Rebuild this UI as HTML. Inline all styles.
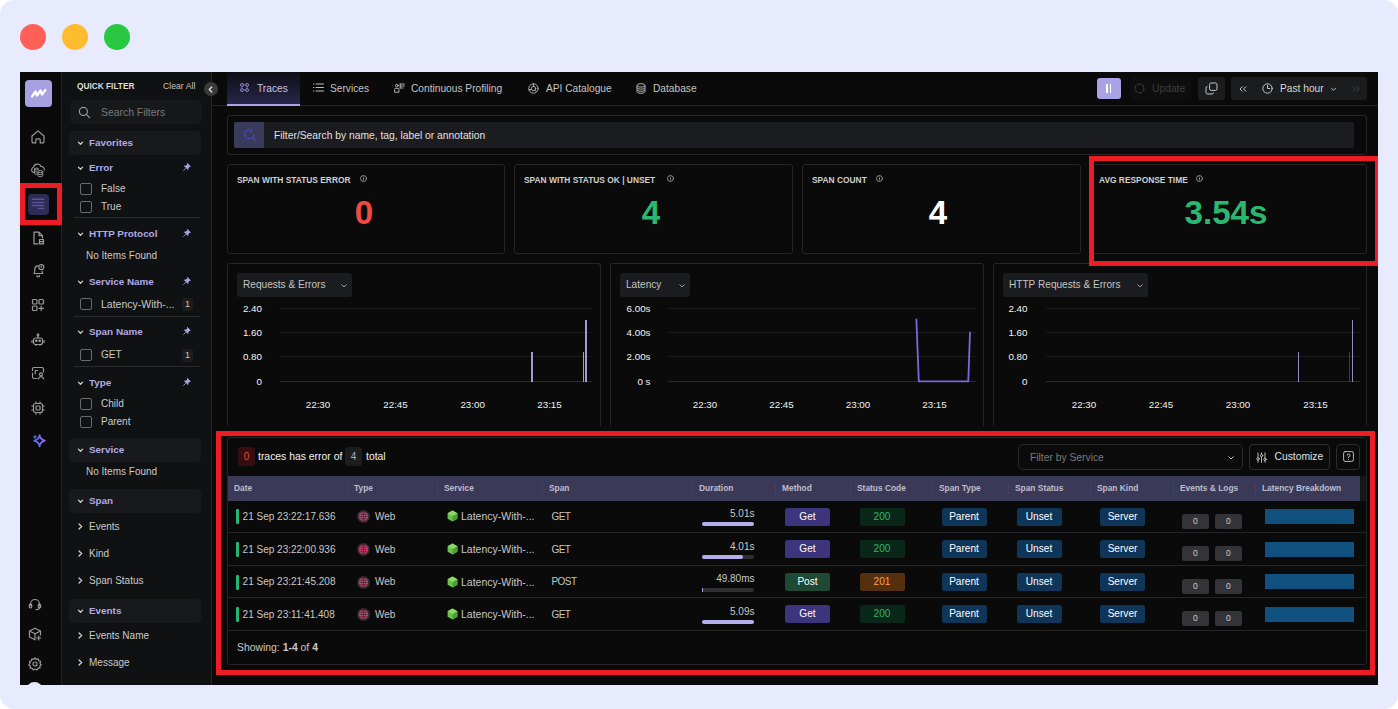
<!DOCTYPE html><html><head><meta charset="utf-8"><title>Traces</title><style>
*{box-sizing:border-box;margin:0;padding:0}
html,body{width:1398px;height:709px;overflow:hidden;background:#fff}
body{font-family:"Liberation Sans",sans-serif;color:#d6d6d6;font-size:11px;position:relative}
.frame{position:absolute;left:0;top:0;width:1398px;height:709px;background:#e8ebfe;border-radius:14px;overflow:hidden}
.dot{position:absolute;top:24px;width:26px;height:26px;border-radius:50%}
.app{position:absolute;left:20px;top:72px;width:1358px;height:613px;background:#0a0a0a;overflow:hidden}
.abs{position:absolute}
.t{position:absolute;white-space:nowrap;line-height:1}
.nav{position:absolute;left:0;top:0;width:42px;height:613px;background:#0a0a0a;border-right:1px solid #222}
.side{position:absolute;left:42px;top:0;width:150px;height:613px;background:#101113;border-right:1px solid #262626}
.hdr{position:absolute;left:7px;width:132px;height:24px;background:#18191c;border-radius:5px}
.lav{color:#b0aae6;font-weight:bold}
.cb{position:absolute;left:18px;width:12px;height:12px;border:1px solid #6a6a6a;border-radius:2px}
.div{position:absolute;left:12px;width:126px;height:1px;background:#2a2a2c}
.cnt{position:absolute;left:138px;width:11px;height:13px;background:#1b1c1e;border-radius:2px;color:#c8c8c8;font-size:9px;text-align:center;line-height:13px}
.card{position:absolute;border:1px solid #262626;border-radius:3px;background:#0a0a0a}
.red{position:absolute;border:5px solid #ee1c25}
.badge{position:absolute;height:18px;border-radius:2.5px;text-align:center;line-height:18px;font-size:10.1px;color:#fff}
svg{position:absolute;overflow:visible}
</style></head><body>
<div class="frame">
<div class="dot" style="left:20px;background:#ff5f57"></div>
<div class="dot" style="left:62px;background:#febc2e"></div>
<div class="dot" style="left:104px;background:#28c840"></div>
<div class="app">
<div class="nav"></div>
<div class="abs" style="left:5px;top:8px;width:27px;height:27px;background:#a7a1e2;border-radius:4px"></div>
<svg style="left:5px;top:8px" width="27" height="27" viewBox="0 0 27 27"><path d="M7 16.5 L10.5 11.5 L12 15.5 L15.5 10.5 L17 14.5 L20.5 9.8" fill="none" stroke="#fff" stroke-width="2.2" stroke-linecap="round" stroke-linejoin="round"/></svg>
<div class="abs" style="left:7.800000000000001px;top:122px;width:21px;height:21px;background:#2e2c52;border-radius:4px"></div>
<svg style="left:10.299999999999997px;top:57.30000000000001px" width="16" height="16" viewBox="0 0 16 16" fill="none" stroke="#9a9a9a" stroke-width="1.2" stroke-linecap="round" stroke-linejoin="round"><path d="M2 7 L8 1.9 L14 7 V12.6 A1.3 1.3 0 0 1 12.7 13.9 H10.2 V10.8 A1 1 0 0 0 9.2 9.8 H6.8 A1 1 0 0 0 5.8 10.8 V13.9 H3.3 A1.3 1.3 0 0 1 2 12.6 Z"/></svg>
<svg style="left:10.299999999999997px;top:90.0px" width="16" height="16" viewBox="0 0 16 16" fill="none" stroke="#9a9a9a" stroke-width="1.2" stroke-linecap="round" stroke-linejoin="round"><path d="M3.4 10.6 A3.1 3.1 0 0 1 3.6 4.9 A3.9 3.9 0 0 1 11 4.6 A3 3 0 0 1 14.3 8.2" stroke-width="1.1"/><ellipse cx="6.3" cy="7" rx="1.9" ry="0.9" stroke-width="1"/><path d="M4.4 7 V11.4 A1.9 0.9 0 0 0 6.6 12.2 M4.4 9.2 A1.9 0.9 0 0 0 6.6 10" stroke-width="1"/><ellipse cx="10.3" cy="9.6" rx="2.4" ry="1.1" stroke-width="1"/><path d="M7.9 9.6 V13.6 A2.4 1.1 0 0 0 12.7 13.6 V9.6 M7.9 11.6 A2.4 1.1 0 0 0 12.7 11.6" stroke-width="1"/></svg>
<svg style="left:10.399999999999999px;top:124.4px" width="16" height="16" viewBox="0 0 16 16" fill="none" stroke="#58539c" stroke-width="1.5" stroke-linecap="round" stroke-linejoin="round"><path d="M2.3 3.2 H13.7 M2.3 6.4 H4.2 M5.2 6.4 H13.7 M2.3 9.4 H10 M11 9.4 H13.7 M8.2 12.6 H13.7"/></svg>
<svg style="left:10.0px;top:158.0px" width="16" height="16" viewBox="0 0 16 16" fill="none" stroke="#9a9a9a" stroke-width="1.2" stroke-linecap="round" stroke-linejoin="round"><path d="M9 2.2 H4 V13.8 H8 M9 2.2 L12.5 5.7 V8 M9 2.2 V5.7 H12.5"/><rect x="9.5" y="9.5" width="4" height="4.3"/><path d="M9.5 11.6 H13.5"/></svg>
<svg style="left:10.0px;top:190.3px" width="16" height="16" viewBox="0 0 16 16" fill="none" stroke="#9a9a9a" stroke-width="1.2" stroke-linecap="round" stroke-linejoin="round"><path d="M4 11.5 C5 10 4.6 8.5 4.8 7 A3.4 3.4 0 0 1 8 3.8 M12 9 C12 10 12.3 10.8 12.8 11.5 H4 M6.8 13.5 A1.4 1.4 0 0 0 9.6 13.5"/><circle cx="11.3" cy="5" r="2.5"/><path d="M11.3 3.9 V5.2"/></svg>
<svg style="left:10.0px;top:225.0px" width="16" height="16" viewBox="0 0 16 16" fill="none" stroke="#9a9a9a" stroke-width="1.2" stroke-linecap="round" stroke-linejoin="round"><rect x="2.5" y="2.5" width="4.5" height="4.5" rx="1"/><rect x="9" y="2.5" width="4.5" height="4.5" rx="1"/><rect x="2.5" y="9" width="4.5" height="4.5" rx="1"/><path d="M11.2 9.2 V13.6 M9 11.4 H13.4"/></svg>
<svg style="left:10.0px;top:260.0px" width="16" height="16" viewBox="0 0 16 16" fill="none" stroke="#9a9a9a" stroke-width="1.2" stroke-linecap="round" stroke-linejoin="round"><rect x="3.5" y="6" width="9" height="6.5" rx="2"/><path d="M8 6 V3.8 M2 8.5 V10.5 M14 8.5 V10.5 M6 12.5 V13.5 M10 12.5 V13.5"/><circle cx="8" cy="3" r="0.8"/><circle cx="6.3" cy="8.8" r="0.7" fill="#9a9a9a"/><circle cx="9.7" cy="8.8" r="0.7" fill="#9a9a9a"/></svg>
<svg style="left:10.0px;top:293.0px" width="16" height="16" viewBox="0 0 16 16" fill="none" stroke="#9a9a9a" stroke-width="1.2" stroke-linecap="round" stroke-linejoin="round"><path d="M2.5 5.5 V4 A1.5 1.5 0 0 1 4 2.5 H12 A1.5 1.5 0 0 1 13.5 4 V7 M2.5 8 V12 A1.5 1.5 0 0 0 4 13.5 H7"/><circle cx="11" cy="9.3" r="1.5"/><path d="M8.5 13.8 A2.6 2.6 0 0 1 13.6 13.8 M5.3 5.5 V8.8 M5.3 5.5 H7.5"/></svg>
<svg style="left:10.0px;top:327.7px" width="16" height="16" viewBox="0 0 16 16" fill="none" stroke="#9a9a9a" stroke-width="1.2" stroke-linecap="round" stroke-linejoin="round"><rect x="3.5" y="3.5" width="9" height="9" rx="2"/><rect x="6" y="6" width="4" height="4" rx="0.8"/><path d="M6 1.8 V3.5 M10 1.8 V3.5 M6 12.5 V14.2 M10 12.5 V14.2 M1.8 6 H3.5 M1.8 10 H3.5 M12.5 6 H14.2 M12.5 10 H14.2"/></svg>
<svg style="left:10.600000000000001px;top:360.6px" width="16" height="16" viewBox="0 0 16 16" fill="none" stroke-width="1.7" stroke-linejoin="round"><defs><linearGradient id="spk" x1="0" y1="0" x2="1" y2="0"><stop offset="0" stop-color="#4f6ef2"/><stop offset="1" stop-color="#9a6cf0"/></linearGradient></defs><path d="M8.6 2.2 C9 5.4 10.6 7 13.8 7.6 C10.6 8.4 9 10 8.6 13.4 C8 10 6.4 8.4 3.2 7.8 C6.4 7 8 5.4 8.6 2.2 Z" stroke="url(#spk)"/><path d="M4 1.6 L4.7 3.3 L6.4 4 L4.7 4.7 L4 6.4 L3.3 4.7 L1.6 4 L3.3 3.3 Z" fill="#5a6cf0"/></svg>
<svg style="left:6.600000000000001px;top:523.6px" width="16" height="16" viewBox="0 0 16 16" fill="none" stroke="#9a9a9a" stroke-width="1.2" stroke-linecap="round" stroke-linejoin="round"><path d="M3.5 9.5 V8 A4.5 4.5 0 0 1 12.5 8 V9.5 M12.5 11 C12.5 13 11 13.6 9 13.6"/><rect x="2.3" y="8.2" width="2.4" height="3.6" rx="1"/><rect x="11.3" y="8.2" width="2.4" height="3.6" rx="1"/></svg>
<svg style="left:6.600000000000001px;top:554.0px" width="16" height="16" viewBox="0 0 16 16" fill="none" stroke="#9a9a9a" stroke-width="1.2" stroke-linecap="round" stroke-linejoin="round"><path d="M8 2.2 L13.5 5 V9 M8 2.2 L2.5 5 V11 L8 13.8 M2.5 5 L8 7.8 L13.5 5 M8 7.8 V13.8 M11.7 10 V14 M9.7 12 H13.7"/></svg>
<svg style="left:6.600000000000001px;top:584.3px" width="16" height="16" viewBox="0 0 16 16" fill="none" stroke="#9a9a9a" stroke-width="1.2" stroke-linecap="round" stroke-linejoin="round"><circle cx="8" cy="8" r="2"/><path d="M8 1.8 L9.3 3.3 L11.2 2.8 L11.7 4.8 L13.6 5.4 L13 7.3 L14.3 8.8 L12.8 10 L13 12 L11 12.2 L10 14 L8.2 13 L6.3 14 L5.3 12.3 L3.3 12.2 L3.4 10.2 L1.8 9 L3 7.4 L2.5 5.5 L4.4 4.9 L4.9 2.9 L6.8 3.3 Z"/></svg>
<div class="abs" style="left:6px;top:610px;width:17px;height:17px;border-radius:50%;background:#e6e6f2"></div>
<div class="side">
<div class="t " style="left:15px;top:9.8px;font-size:8.3px;color:#dcdcdc;font-weight:bold">QUICK FILTER</div>
<div class="t " style="left:101px;top:9.7px;font-size:8.7px;color:#c4c4c4;font-weight:normal">Clear All</div>
<div class="abs" style="left:8px;top:28.400000000000006px;width:132px;height:23.6px;background:#17181a;border-radius:5px"></div>
<svg style="left:16px;top:34px" width="13" height="13" viewBox="0 0 13 13" fill="none" stroke="#9a9a9a" stroke-width="1.2" stroke-linecap="round"><circle cx="5.4" cy="5.4" r="4"/><path d="M8.4 8.4 L11.6 11.6"/></svg>
<div class="t " style="left:39px;top:36.3px;font-size:10.4px;color:#7a7a7a;font-weight:normal">Search Filters</div>
<div class="hdr" style="top:58.6px"></div>
<svg style="left:14.5px;top:68.5px" width="7" height="5" viewBox="0 0 7 5"><path d="M1.4 1.1 L3.5 3.3 L5.6 1.1" fill="none" stroke="#d0d0d0" stroke-width="1.25" stroke-linecap="round" stroke-linejoin="round"/></svg>
<div class="t lav" style="left:27px;top:66.0px;font-size:9.9px;">Favorites</div>
<svg style="left:14.5px;top:93.5px" width="7" height="5" viewBox="0 0 7 5"><path d="M1.4 1.1 L3.5 3.3 L5.6 1.1" fill="none" stroke="#d0d0d0" stroke-width="1.25" stroke-linecap="round" stroke-linejoin="round"/></svg>
<div class="t lav" style="left:27px;top:91.0px;font-size:9.9px;">Error</div>
<svg style="left:121px;top:91px" width="8" height="8" viewBox="0 0 8 8"><path d="M4.6 0.6 L7.4 3.4 L6.2 3.8 L5 5 L5 6.6 L1.4 3 L3 3 L4.2 1.8 Z M2.6 5.4 L0.6 7.4" fill="#a9a3e6" stroke="#a9a3e6" stroke-width="0.8" stroke-linejoin="round" stroke-linecap="round"/></svg>
<div class="cb" style="top:111px"></div>
<div class="t " style="left:39px;top:112.0px;font-size:10px;color:#c9c9c9;font-weight:normal">False</div>
<div class="cb" style="top:129px"></div>
<div class="t " style="left:39px;top:130.0px;font-size:10px;color:#c9c9c9;font-weight:normal">True</div>
<div class="div" style="top:145px"></div>
<svg style="left:14.5px;top:159.5px" width="7" height="5" viewBox="0 0 7 5"><path d="M1.4 1.1 L3.5 3.3 L5.6 1.1" fill="none" stroke="#d0d0d0" stroke-width="1.25" stroke-linecap="round" stroke-linejoin="round"/></svg>
<div class="t lav" style="left:27px;top:157.1px;font-size:9.9px;">HTTP Protocol</div>
<svg style="left:121px;top:157px" width="8" height="8" viewBox="0 0 8 8"><path d="M4.6 0.6 L7.4 3.4 L6.2 3.8 L5 5 L5 6.6 L1.4 3 L3 3 L4.2 1.8 Z M2.6 5.4 L0.6 7.4" fill="#a9a3e6" stroke="#a9a3e6" stroke-width="0.8" stroke-linejoin="round" stroke-linecap="round"/></svg>
<div class="t " style="left:24px;top:179.0px;font-size:10px;color:#c9c9c9;font-weight:normal">No Items Found</div>
<svg style="left:14.5px;top:207.5px" width="7" height="5" viewBox="0 0 7 5"><path d="M1.4 1.1 L3.5 3.3 L5.6 1.1" fill="none" stroke="#d0d0d0" stroke-width="1.25" stroke-linecap="round" stroke-linejoin="round"/></svg>
<div class="t lav" style="left:27px;top:205.1px;font-size:9.9px;">Service Name</div>
<svg style="left:121px;top:205px" width="8" height="8" viewBox="0 0 8 8"><path d="M4.6 0.6 L7.4 3.4 L6.2 3.8 L5 5 L5 6.6 L1.4 3 L3 3 L4.2 1.8 Z M2.6 5.4 L0.6 7.4" fill="#a9a3e6" stroke="#a9a3e6" stroke-width="0.8" stroke-linejoin="round" stroke-linecap="round"/></svg>
<div class="cb" style="top:226px"></div>
<div class="t " style="left:39px;top:226.8px;font-size:10.5px;color:#c9c9c9;font-weight:normal">Latency-With-...</div>
<div class="cnt" style="left:120px;top:225.5px">1</div>
<div class="div" style="top:244px"></div>
<svg style="left:14.5px;top:257.5px" width="7" height="5" viewBox="0 0 7 5"><path d="M1.4 1.1 L3.5 3.3 L5.6 1.1" fill="none" stroke="#d0d0d0" stroke-width="1.25" stroke-linecap="round" stroke-linejoin="round"/></svg>
<div class="t lav" style="left:27px;top:255.1px;font-size:9.9px;">Span Name</div>
<svg style="left:121px;top:255px" width="8" height="8" viewBox="0 0 8 8"><path d="M4.6 0.6 L7.4 3.4 L6.2 3.8 L5 5 L5 6.6 L1.4 3 L3 3 L4.2 1.8 Z M2.6 5.4 L0.6 7.4" fill="#a9a3e6" stroke="#a9a3e6" stroke-width="0.8" stroke-linejoin="round" stroke-linecap="round"/></svg>
<div class="cb" style="top:277px"></div>
<div class="t " style="left:39px;top:278.0px;font-size:10px;color:#c9c9c9;font-weight:normal">GET</div>
<div class="cnt" style="left:120px;top:276.5px">1</div>
<div class="div" style="top:293.7px"></div>
<svg style="left:14.5px;top:308.5px" width="7" height="5" viewBox="0 0 7 5"><path d="M1.4 1.1 L3.5 3.3 L5.6 1.1" fill="none" stroke="#d0d0d0" stroke-width="1.25" stroke-linecap="round" stroke-linejoin="round"/></svg>
<div class="t lav" style="left:27px;top:306.1px;font-size:9.9px;">Type</div>
<svg style="left:121px;top:306px" width="8" height="8" viewBox="0 0 8 8"><path d="M4.6 0.6 L7.4 3.4 L6.2 3.8 L5 5 L5 6.6 L1.4 3 L3 3 L4.2 1.8 Z M2.6 5.4 L0.6 7.4" fill="#a9a3e6" stroke="#a9a3e6" stroke-width="0.8" stroke-linejoin="round" stroke-linecap="round"/></svg>
<div class="cb" style="top:326px"></div>
<div class="t " style="left:39px;top:327.0px;font-size:10px;color:#c9c9c9;font-weight:normal">Child</div>
<div class="cb" style="top:344px"></div>
<div class="t " style="left:39px;top:345.0px;font-size:10px;color:#c9c9c9;font-weight:normal">Parent</div>
<div class="hdr" style="top:365.6px"></div>
<svg style="left:14.5px;top:375.5px" width="7" height="5" viewBox="0 0 7 5"><path d="M1.4 1.1 L3.5 3.3 L5.6 1.1" fill="none" stroke="#d0d0d0" stroke-width="1.25" stroke-linecap="round" stroke-linejoin="round"/></svg>
<div class="t lav" style="left:27px;top:373.1px;font-size:9.9px;">Service</div>
<div class="t " style="left:24px;top:395.0px;font-size:10px;color:#c9c9c9;font-weight:normal">No Items Found</div>
<div class="hdr" style="top:416.6px"></div>
<svg style="left:14.5px;top:426.5px" width="7" height="5" viewBox="0 0 7 5"><path d="M1.4 1.1 L3.5 3.3 L5.6 1.1" fill="none" stroke="#d0d0d0" stroke-width="1.25" stroke-linecap="round" stroke-linejoin="round"/></svg>
<div class="t lav" style="left:27px;top:424.1px;font-size:9.9px;">Span</div>
<svg style="left:15.5px;top:450.8px" width="5" height="7" viewBox="0 0 5 7"><path d="M1 1 L3.6 3.5 L1 6" fill="none" stroke="#d0d0d0" stroke-width="1.3" stroke-linecap="round" stroke-linejoin="round"/></svg>
<div class="t " style="left:27px;top:450.0px;font-size:10px;color:#c9c9c9;font-weight:normal">Events</div>
<svg style="left:15.5px;top:477.8px" width="5" height="7" viewBox="0 0 5 7"><path d="M1 1 L3.6 3.5 L1 6" fill="none" stroke="#d0d0d0" stroke-width="1.3" stroke-linecap="round" stroke-linejoin="round"/></svg>
<div class="t " style="left:27px;top:477.0px;font-size:10px;color:#c9c9c9;font-weight:normal">Kind</div>
<svg style="left:15.5px;top:504.8px" width="5" height="7" viewBox="0 0 5 7"><path d="M1 1 L3.6 3.5 L1 6" fill="none" stroke="#d0d0d0" stroke-width="1.3" stroke-linecap="round" stroke-linejoin="round"/></svg>
<div class="t " style="left:27px;top:504.0px;font-size:10px;color:#c9c9c9;font-weight:normal">Span Status</div>
<div class="hdr" style="top:526.6px"></div>
<svg style="left:14.5px;top:536.5px" width="7" height="5" viewBox="0 0 7 5"><path d="M1.4 1.1 L3.5 3.3 L5.6 1.1" fill="none" stroke="#d0d0d0" stroke-width="1.25" stroke-linecap="round" stroke-linejoin="round"/></svg>
<div class="t lav" style="left:27px;top:534.0px;font-size:9.9px;">Events</div>
<svg style="left:15.5px;top:559.8px" width="5" height="7" viewBox="0 0 5 7"><path d="M1 1 L3.6 3.5 L1 6" fill="none" stroke="#d0d0d0" stroke-width="1.3" stroke-linecap="round" stroke-linejoin="round"/></svg>
<div class="t " style="left:27px;top:559.0px;font-size:10px;color:#c9c9c9;font-weight:normal">Events Name</div>
<svg style="left:15.5px;top:586.8px" width="5" height="7" viewBox="0 0 5 7"><path d="M1 1 L3.6 3.5 L1 6" fill="none" stroke="#d0d0d0" stroke-width="1.3" stroke-linecap="round" stroke-linejoin="round"/></svg>
<div class="t " style="left:27px;top:586.0px;font-size:10px;color:#c9c9c9;font-weight:normal">Message</div>
</div>
<div class="abs" style="left:184px;top:10px;width:14px;height:14px;border-radius:50%;background:#3a3a3c"></div>
<svg style="left:188px;top:13.5px" width="5" height="7" viewBox="0 0 5 7"><path d="M3.8 1 L1.2 3.5 L3.8 6" fill="none" stroke="#e0e0e0" stroke-width="1.3" stroke-linecap="round" stroke-linejoin="round"/></svg>
<div class="abs" style="left:192px;top:33px;width:1166px;height:1px;background:#232323"></div>
<div class="abs" style="left:207px;top:0;width:73px;height:34px;background:linear-gradient(#0e0e14,#27264a);border-bottom:2px solid #a9a3e6"></div>
<svg style="left:220px;top:11px" width="9" height="9" viewBox="0 0 9 9" fill="none" stroke="#a9a3e6" stroke-width="0.9"><rect x="0.6" y="0.6" width="2.6" height="2.6" rx="0.8"/><rect x="5.8" y="0.6" width="2.6" height="2.6" rx="0.8"/><rect x="0.6" y="5.8" width="2.6" height="2.6" rx="0.8"/><rect x="5.8" y="5.8" width="2.6" height="2.6" rx="0.8"/><path d="M3.2 1.9 H5.8 M3.2 7.1 H5.8 M1.9 3.2 V5.8 M7.1 3.2 V5.8" stroke-width="0.6"/></svg>
<div class="t" style="left:237px;top:11.5px;font-size:10.2px;color:#c6c3e6;font-weight:normal;">Traces</div>
<svg style="left:293px;top:11px" width="11" height="9" viewBox="0 0 11 9" fill="none" stroke="#bdbdbd" stroke-width="1" stroke-linecap="round"><path d="M3 1 H10.5 M3 4.5 H10.5 M3 8 H10.5 M0.5 1 H0.9 M0.5 4.5 H0.9 M0.5 8 H0.9"/></svg>
<div class="t" style="left:310px;top:11.5px;font-size:10.2px;color:#c4c4c4;font-weight:normal;">Services</div>
<svg style="left:374px;top:11px" width="11" height="10" viewBox="0 0 11 10" fill="none" stroke="#bdbdbd" stroke-width="0.9" stroke-linecap="round"><circle cx="2.8" cy="2.6" r="1.4"/><path d="M0.6 8.8 V6.4 A1 1 0 0 1 1.6 5.4 H4 A1 1 0 0 1 5 6.4 V8.8 Z M6.2 1 H10.4 M6.2 3 H10.4 M6.2 5 H9 M6.2 1 V5"/></svg>
<div class="t" style="left:391px;top:11.5px;font-size:10.2px;color:#c4c4c4;font-weight:normal;">Continuous Profiling</div>
<svg style="left:508px;top:10.5px" width="11" height="11" viewBox="0 0 11 11" fill="none" stroke="#bdbdbd" stroke-width="0.9" stroke-linecap="round"><circle cx="5.5" cy="5.5" r="4.7"/><circle cx="5.5" cy="5.5" r="2.2"/><path d="M5.5 0.8 V3.3 M1 7 L3.5 6.3 M8 8.5 L6.8 7.2" /></svg>
<div class="t" style="left:526px;top:11.5px;font-size:10.2px;color:#c4c4c4;font-weight:normal;">API Catalogue</div>
<svg style="left:616px;top:10.5px" width="10" height="11" viewBox="0 0 10 11" fill="none" stroke="#bdbdbd" stroke-width="0.9"><ellipse cx="5" cy="2.4" rx="4" ry="1.7"/><path d="M1 2.4 V8.6 A4 1.7 0 0 0 9 8.6 V2.4 M1 4.5 A4 1.7 0 0 0 9 4.5 M1 6.6 A4 1.7 0 0 0 9 6.6"/></svg>
<div class="t" style="left:633px;top:11.5px;font-size:10.2px;color:#c4c4c4;font-weight:normal;">Database</div>
<div class="abs" style="left:1077px;top:6px;width:24px;height:21px;background:#a9a3e6;border-radius:3px"></div>
<div class="abs" style="left:1086px;top:12px;width:1.8px;height:8.5px;background:#fff"></div><div class="abs" style="left:1089.7px;top:12px;width:1.8px;height:8.5px;background:#fff"></div>
<div class="abs" style="left:1110px;top:5px;width:61px;height:23px;background:#0e0e0f;border-radius:3px"></div>
<svg style="left:1114px;top:11px" width="11" height="11" viewBox="0 0 11 11" fill="none" stroke="#3e3e40" stroke-width="1.1" stroke-linecap="round"><circle cx="5.5" cy="5.5" r="4.4" stroke-dasharray="2.6 2"/></svg>
<div class="t" style="left:1132px;top:11.8px;font-size:10.3px;color:#3e3e40;font-weight:normal;">Update</div>
<div class="abs" style="left:1178px;top:5px;width:27px;height:23px;background:#1b1c1e;border-radius:3px"></div>
<svg style="left:1185px;top:10px" width="13" height="13" viewBox="0 0 13 13" fill="none" stroke="#c8c8c8" stroke-width="1" stroke-linejoin="round"><rect x="4.6" y="1" width="7.4" height="7.4" rx="1.6"/><path d="M2.6 4.6 H2.4 A1.4 1.4 0 0 0 1 6 V10.6 A1.4 1.4 0 0 0 2.4 12 H7 A1.4 1.4 0 0 0 8.4 10.6 V10.4"/></svg>
<div class="abs" style="left:1211px;top:5px;width:136px;height:23px;background:#1b1c1e;border-radius:3px"></div>
<svg style="left:1218.5px;top:13.5px" width="8" height="6" viewBox="0 0 8 6" fill="none" stroke="#d8d8d8" stroke-width="0.9" stroke-linecap="round" stroke-linejoin="round"><path d="M3.2 0.8 L1 3 L3.2 5.2 M6.8 0.8 L4.6 3 L6.8 5.2"/></svg>
<svg style="left:1241.5px;top:10.5px" width="11" height="11" viewBox="0 0 11 11" fill="none" stroke="#c8c8c8" stroke-width="1" stroke-linecap="round"><circle cx="5.5" cy="5.5" r="4.7"/><path d="M5.5 2.6 V5.5 H7.8"/></svg>
<div class="t" style="left:1260px;top:11.9px;font-size:10.2px;color:#d8d8d8;font-weight:normal;">Past hour</div>
<svg style="left:1309.5px;top:14.5px" width="7" height="5" viewBox="0 0 7 5"><path d="M1.4 1.2 L3.5 3.3 L5.6 1.2" fill="none" stroke="#c8c8c8" stroke-width="0.9" stroke-linecap="round" stroke-linejoin="round"/></svg>
<svg style="left:1331.5px;top:13.5px" width="8" height="6" viewBox="0 0 8 6" fill="none" stroke="#444446" stroke-width="0.9" stroke-linecap="round" stroke-linejoin="round"><path d="M1.2 0.8 L3.4 3 L1.2 5.2 M4.8 0.8 L7 3 L4.8 5.2"/></svg>
<div class="card" style="left:207px;top:43px;width:1140px;height:40px"></div>
<div class="abs" style="left:214px;top:50px;width:1120px;height:26px;background:#1b1c1f;border-radius:2px"></div>
<div class="abs" style="left:214px;top:50px;width:30px;height:26px;background:#3a3a5c;border-radius:2px 0 0 2px"></div>
<svg style="left:223px;top:56px" width="14" height="14" viewBox="0 0 14 14" fill="none" stroke="#4a4bc0" stroke-width="1.1" stroke-linecap="round"><path d="M10.8 6.2 A4.6 4.6 0 1 1 6.2 1.6"/><path d="M9.4 9.4 L12.6 12.6"/><path d="M8.2 0.8 L8.8 2.4 L10.4 3 L8.8 3.6 L8.2 5.2 L7.6 3.6 L6 3 L7.6 2.4 Z" fill="#4a4bc0" stroke="none"/></svg>
<div class="t" style="left:254px;top:59.2px;font-size:10.3px;color:#e0e0e0;font-weight:normal;">Filter/Search by name, tag, label or annotation</div>
<div class="card" style="left:207px;top:92px;width:278px;height:90px"></div>
<div class="t" style="left:217px;top:104.1px;font-size:8.4px;color:#d0d0d0;font-weight:bold;">SPAN WITH STATUS ERROR</div>
<svg style="left:340.0px;top:103.1px" width="7" height="7" viewBox="0 0 7 7" fill="none" stroke="#bdbdbd" stroke-width="0.7" stroke-linecap="round"><circle cx="3.5" cy="3.5" r="3"/><path d="M3.5 3.2 V5 M3.5 2 V2.1"/></svg>
<div class="t" style="left:344px;transform:translateX(-50%) scaleX(1.02);top:124.7px;font-size:32.5px;color:#f04b3f;font-weight:bold;">0</div>
<div class="card" style="left:494px;top:92px;width:279px;height:90px"></div>
<div class="t" style="left:504px;top:104.1px;font-size:8.4px;color:#d0d0d0;font-weight:bold;">SPAN WITH STATUS OK | UNSET</div>
<svg style="left:647.0px;top:103.1px" width="7" height="7" viewBox="0 0 7 7" fill="none" stroke="#bdbdbd" stroke-width="0.7" stroke-linecap="round"><circle cx="3.5" cy="3.5" r="3"/><path d="M3.5 3.2 V5 M3.5 2 V2.1"/></svg>
<div class="t" style="left:631px;transform:translateX(-50%) scaleX(1.02);top:124.7px;font-size:32.5px;color:#2ab870;font-weight:bold;">4</div>
<div class="card" style="left:782px;top:92px;width:279px;height:90px"></div>
<div class="t" style="left:792px;top:104.1px;font-size:8.4px;color:#d0d0d0;font-weight:bold;">SPAN COUNT</div>
<svg style="left:856.0px;top:103.1px" width="7" height="7" viewBox="0 0 7 7" fill="none" stroke="#bdbdbd" stroke-width="0.7" stroke-linecap="round"><circle cx="3.5" cy="3.5" r="3"/><path d="M3.5 3.2 V5 M3.5 2 V2.1"/></svg>
<div class="t" style="left:918px;transform:translateX(-50%) scaleX(1.02);top:124.7px;font-size:32.5px;color:#ffffff;font-weight:bold;">4</div>
<div class="card" style="left:1071px;top:92px;width:276px;height:90px"></div>
<div class="t" style="left:1079px;top:104.1px;font-size:8.4px;color:#d0d0d0;font-weight:bold;">AVG RESPONSE TIME</div>
<svg style="left:1176.0px;top:103.1px" width="7" height="7" viewBox="0 0 7 7" fill="none" stroke="#bdbdbd" stroke-width="0.7" stroke-linecap="round"><circle cx="3.5" cy="3.5" r="3"/><path d="M3.5 3.2 V5 M3.5 2 V2.1"/></svg>
<div class="t" style="left:1206px;transform:translateX(-50%) scaleX(1.02);top:124.7px;font-size:32.5px;color:#2ab870;font-weight:bold;">3.54s</div>
<div class="card" style="left:207px;top:191px;width:374px;height:163px;border-bottom:none;border-radius:3px 3px 0 0"></div>
<div class="abs" style="left:217px;top:201px;width:115px;height:24px;background:#1b1c1f;border-radius:3px"></div>
<div class="t" style="left:223px;top:207.9px;font-size:10.1px;color:#c4c4c4;font-weight:normal;">Requests &amp; Errors</div>
<svg style="left:321px;top:211.5px" width="6" height="4" viewBox="0 0 6 4"><path d="M0.7 0.7 L3 3 L5.3 0.7" fill="none" stroke="#aaa" stroke-width="0.9" stroke-linecap="round" stroke-linejoin="round"/></svg>
<div class="t" style="right:1116px;top:232.2px;font-size:9.8px;color:#f4f4f4;font-weight:normal;">2.40</div>
<div class="abs" style="left:260px;top:236.1px;width:312px;height:1px;background:#1b1b1c"></div>
<div class="t" style="right:1116px;top:256.3px;font-size:9.8px;color:#f4f4f4;font-weight:normal;">1.60</div>
<div class="abs" style="left:260px;top:260.2px;width:312px;height:1px;background:#1b1b1c"></div>
<div class="t" style="right:1116px;top:280.4px;font-size:9.8px;color:#f4f4f4;font-weight:normal;">0.80</div>
<div class="abs" style="left:260px;top:284.3px;width:312px;height:1px;background:#1b1b1c"></div>
<div class="t" style="right:1116px;top:305.2px;font-size:9.8px;color:#f4f4f4;font-weight:normal;">0</div>
<div class="abs" style="left:260px;top:309.1px;width:312px;height:1px;background:#2a2a2b"></div>
<div class="t" style="left:298px;transform:translateX(-50%);top:328.1px;font-size:9.8px;color:#f0f0f0;font-weight:normal;">22:30</div>
<div class="t" style="left:375.5px;transform:translateX(-50%);top:328.1px;font-size:9.8px;color:#f0f0f0;font-weight:normal;">22:45</div>
<div class="t" style="left:452.7px;transform:translateX(-50%);top:328.1px;font-size:9.8px;color:#f0f0f0;font-weight:normal;">23:00</div>
<div class="t" style="left:529.5px;transform:translateX(-50%);top:328.1px;font-size:9.8px;color:#f0f0f0;font-weight:normal;">23:15</div>
<div class="card" style="left:590px;top:191px;width:374px;height:163px;border-bottom:none;border-radius:3px 3px 0 0"></div>
<div class="abs" style="left:600px;top:201px;width:70px;height:24px;background:#1b1c1f;border-radius:3px"></div>
<div class="t" style="left:606px;top:207.9px;font-size:10.1px;color:#c4c4c4;font-weight:normal;">Latency</div>
<svg style="left:659px;top:211.5px" width="6" height="4" viewBox="0 0 6 4"><path d="M0.7 0.7 L3 3 L5.3 0.7" fill="none" stroke="#aaa" stroke-width="0.9" stroke-linecap="round" stroke-linejoin="round"/></svg>
<div class="t" style="right:727.5px;top:232.2px;font-size:9.8px;color:#f4f4f4;font-weight:normal;">6.00s</div>
<div class="abs" style="left:648px;top:236.1px;width:308px;height:1px;background:#1b1b1c"></div>
<div class="t" style="right:727.5px;top:256.3px;font-size:9.8px;color:#f4f4f4;font-weight:normal;">4.00s</div>
<div class="abs" style="left:648px;top:260.2px;width:308px;height:1px;background:#1b1b1c"></div>
<div class="t" style="right:727.5px;top:280.4px;font-size:9.8px;color:#f4f4f4;font-weight:normal;">2.00s</div>
<div class="abs" style="left:648px;top:284.3px;width:308px;height:1px;background:#1b1b1c"></div>
<div class="t" style="right:727.5px;top:305.2px;font-size:9.8px;color:#f4f4f4;font-weight:normal;">0 s</div>
<div class="abs" style="left:648px;top:309.1px;width:308px;height:1px;background:#2a2a2b"></div>
<div class="t" style="left:685px;transform:translateX(-50%);top:328.1px;font-size:9.8px;color:#f0f0f0;font-weight:normal;">22:30</div>
<div class="t" style="left:761.5px;transform:translateX(-50%);top:328.1px;font-size:9.8px;color:#f0f0f0;font-weight:normal;">22:45</div>
<div class="t" style="left:838px;transform:translateX(-50%);top:328.1px;font-size:9.8px;color:#f0f0f0;font-weight:normal;">23:00</div>
<div class="t" style="left:914.5px;transform:translateX(-50%);top:328.1px;font-size:9.8px;color:#f0f0f0;font-weight:normal;">23:15</div>
<div class="card" style="left:973px;top:191px;width:374px;height:163px;border-bottom:none;border-radius:3px 3px 0 0"></div>
<div class="abs" style="left:983px;top:201px;width:145px;height:24px;background:#1b1c1f;border-radius:3px"></div>
<div class="t" style="left:989px;top:207.9px;font-size:10.1px;color:#c4c4c4;font-weight:normal;">HTTP Requests &amp; Errors</div>
<svg style="left:1117px;top:211.5px" width="6" height="4" viewBox="0 0 6 4"><path d="M0.7 0.7 L3 3 L5.3 0.7" fill="none" stroke="#aaa" stroke-width="0.9" stroke-linecap="round" stroke-linejoin="round"/></svg>
<div class="t" style="right:350.5px;top:232.2px;font-size:9.8px;color:#f4f4f4;font-weight:normal;">2.40</div>
<div class="abs" style="left:1026px;top:236.1px;width:314px;height:1px;background:#1b1b1c"></div>
<div class="t" style="right:350.5px;top:256.3px;font-size:9.8px;color:#f4f4f4;font-weight:normal;">1.60</div>
<div class="abs" style="left:1026px;top:260.2px;width:314px;height:1px;background:#1b1b1c"></div>
<div class="t" style="right:350.5px;top:280.4px;font-size:9.8px;color:#f4f4f4;font-weight:normal;">0.80</div>
<div class="abs" style="left:1026px;top:284.3px;width:314px;height:1px;background:#1b1b1c"></div>
<div class="t" style="right:350.5px;top:305.2px;font-size:9.8px;color:#f4f4f4;font-weight:normal;">0</div>
<div class="abs" style="left:1026px;top:309.1px;width:314px;height:1px;background:#2a2a2b"></div>
<div class="t" style="left:1064px;transform:translateX(-50%);top:328.1px;font-size:9.8px;color:#f0f0f0;font-weight:normal;">22:30</div>
<div class="t" style="left:1141px;transform:translateX(-50%);top:328.1px;font-size:9.8px;color:#f0f0f0;font-weight:normal;">22:45</div>
<div class="t" style="left:1218px;transform:translateX(-50%);top:328.1px;font-size:9.8px;color:#f0f0f0;font-weight:normal;">23:00</div>
<div class="t" style="left:1295.5px;transform:translateX(-50%);top:328.1px;font-size:9.8px;color:#f0f0f0;font-weight:normal;">23:15</div>
<div class="abs" style="left:511.4px;top:279.5px;width:1.3px;height:30.1px;background:#a09bd6"></div>
<div class="abs" style="left:562.6px;top:279.5px;width:1.3px;height:30.1px;background:#a09bd6"></div>
<div class="abs" style="left:565.4px;top:248.3px;width:1.3px;height:61.3px;background:#a09bd6"></div>
<div class="abs" style="left:1277.5px;top:279.5px;width:1.1px;height:30.1px;background:#8f8bc4"></div>
<div class="abs" style="left:1329.0px;top:279.5px;width:1.1px;height:30.1px;background:#1d3f8f"></div>
<div class="abs" style="left:1331.7px;top:248.3px;width:1.1px;height:61.3px;background:#8f8bc4"></div>
<svg style="left:880px;top:228px" width="100" height="100" viewBox="900 300 100 100"><path d="M916.4 319.5 L918.8 381.3 L968.3 381.3 L970 332.5" fill="none" stroke="#7b68e0" stroke-width="1.8" stroke-linejoin="round" stroke-linecap="round"/></svg>
<div class="card" style="left:207px;top:365px;width:1140px;height:228px"></div>
<div class="abs" style="left:218px;top:374.5px;width:17px;height:19px;background:#360d10;border-radius:3px"></div>
<div class="t" style="left:226.5px;transform:translateX(-50%);top:380.0px;font-size:10px;color:#e5484d;font-weight:normal;">0</div>
<div class="t" style="left:238px;top:380.3px;font-size:10.4px;color:#f2f2f2;font-weight:normal;">traces has error of</div>
<div class="abs" style="left:325px;top:374.5px;width:17px;height:19px;background:#1d1d1f;border-radius:3px"></div>
<div class="t" style="left:333.5px;transform:translateX(-50%);top:380.0px;font-size:10px;color:#b0b0b0;font-weight:normal;">4</div>
<div class="t" style="left:346px;top:380.3px;font-size:10.4px;color:#f2f2f2;font-weight:normal;">total</div>
<div class="abs" style="left:998px;top:372px;width:225px;height:26px;border:1px solid #2a2a2c;border-radius:5px;background:#0b0b0c"></div>
<div class="t" style="left:1010px;top:381.2px;font-size:10.3px;color:#7a7a7a;font-weight:normal;">Filter by Service</div>
<svg style="left:1208px;top:384px" width="6" height="4" viewBox="0 0 6 4"><path d="M0.7 0.7 L3 3 L5.3 0.7" fill="none" stroke="#bbb" stroke-width="1" stroke-linecap="round" stroke-linejoin="round"/></svg>
<div class="abs" style="left:1229px;top:372px;width:81px;height:26px;border:1px solid #2e2e30;border-radius:4px;background:#0b0b0c"></div>
<svg style="left:1236px;top:379.5px" width="11" height="11" viewBox="0 0 11 11" fill="none" stroke="#c8c8c8" stroke-width="0.9" stroke-linecap="round"><path d="M2 0.8 V10.2 M5.5 0.8 V10.2 M9 0.8 V10.2"/><circle cx="2" cy="6.8" r="1.2" fill="#0b0b0c"/><circle cx="5.5" cy="3.6" r="1.2" fill="#0b0b0c"/><circle cx="9" cy="7.4" r="1.2" fill="#0b0b0c"/></svg>
<div class="t" style="left:1254.5px;top:379.9px;font-size:10.3px;color:#e0e0e0;font-weight:normal;">Customize</div>
<div class="abs" style="left:1316px;top:372px;width:24px;height:26px;border:1px solid #2e2e30;border-radius:4px;background:#0b0b0c"></div>
<svg style="left:1322.5px;top:379px" width="11" height="11" viewBox="0 0 11 11" fill="none" stroke="#c8c8c8" stroke-width="0.9" stroke-linecap="round" stroke-linejoin="round"><rect x="0.6" y="0.6" width="9.8" height="9.8" rx="1.6"/><path d="M4.2 4.2 A1.4 1.4 0 1 1 5.5 5.8 V6.6 M5.5 8.2 V8.3"/></svg>
<div class="abs" style="left:208px;top:404px;width:1132px;height:25px;background:#3b3958"></div>
<div class="abs" style="left:1340px;top:404px;width:6px;height:25px;background:#17171a"></div>
<div class="t" style="left:214px;top:412.3px;font-size:8.4px;color:#bdbdcd;font-weight:bold;">Date</div>
<div class="t" style="left:334px;top:412.3px;font-size:8.4px;color:#bdbdcd;font-weight:bold;">Type</div>
<div class="t" style="left:424px;top:412.3px;font-size:8.4px;color:#bdbdcd;font-weight:bold;">Service</div>
<div class="t" style="left:529px;top:412.3px;font-size:8.4px;color:#bdbdcd;font-weight:bold;">Span</div>
<div class="t" style="left:679px;top:412.3px;font-size:8.4px;color:#bdbdcd;font-weight:bold;">Duration</div>
<div class="t" style="left:762px;top:412.3px;font-size:8.4px;color:#bdbdcd;font-weight:bold;">Method</div>
<div class="t" style="left:837px;top:412.3px;font-size:8.4px;color:#bdbdcd;font-weight:bold;">Status Code</div>
<div class="t" style="left:919px;top:412.3px;font-size:8.4px;color:#bdbdcd;font-weight:bold;">Span Type</div>
<div class="t" style="left:995px;top:412.3px;font-size:8.4px;color:#bdbdcd;font-weight:bold;">Span Status</div>
<div class="t" style="left:1077px;top:412.3px;font-size:8.4px;color:#bdbdcd;font-weight:bold;">Span Kind</div>
<div class="t" style="left:1160px;top:412.3px;font-size:8.4px;color:#bdbdcd;font-weight:bold;">Events &amp; Logs</div>
<div class="t" style="left:1242px;top:412.3px;font-size:8.4px;color:#bdbdcd;font-weight:bold;">Latency Breakdown</div>
<div class="abs" style="left:327px;top:411px;width:1px;height:11px;background:#434162"></div>
<div class="abs" style="left:417px;top:411px;width:1px;height:11px;background:#434162"></div>
<div class="abs" style="left:522px;top:411px;width:1px;height:11px;background:#434162"></div>
<div class="abs" style="left:672px;top:411px;width:1px;height:11px;background:#434162"></div>
<div class="abs" style="left:755px;top:411px;width:1px;height:11px;background:#434162"></div>
<div class="abs" style="left:830px;top:411px;width:1px;height:11px;background:#434162"></div>
<div class="abs" style="left:912px;top:411px;width:1px;height:11px;background:#434162"></div>
<div class="abs" style="left:988px;top:411px;width:1px;height:11px;background:#434162"></div>
<div class="abs" style="left:1070px;top:411px;width:1px;height:11px;background:#434162"></div>
<div class="abs" style="left:1153px;top:411px;width:1px;height:11px;background:#434162"></div>
<div class="abs" style="left:1235px;top:411px;width:1px;height:11px;background:#434162"></div>
<div class="abs" style="left:208px;top:459.8px;width:1138px;height:1px;background:#252527"></div>
<div class="abs" style="left:216px;top:437.1px;width:2.5px;height:15px;background:#22b573;border-radius:1px"></div>
<div class="t" style="left:222.6px;top:439.6px;font-size:10px;color:#c8c8c8;font-weight:normal;">21 Sep 23:22:17.636</div>
<svg style="left:337px;top:438.1px" width="13" height="13" viewBox="0 0 13 13"><circle cx="6.5" cy="6.5" r="6.5" fill="#3a2832"/><circle cx="6.5" cy="6.5" r="4.5" fill="#e8487f"/><g fill="none" stroke="#3a2832" stroke-width="0.7"><ellipse cx="6.5" cy="6.5" rx="1.9" ry="4.5"/><path d="M2 6.5 H11 M2.8 4.3 H10.2 M2.8 8.7 H10.2 M6.5 2 V11"/></g></svg>
<div class="t" style="left:355px;top:439.6px;font-size:10px;color:#c8c8c8;font-weight:normal;">Web</div>
<svg style="left:427px;top:438.1px" width="11" height="12" viewBox="0 0 11 12"><path d="M5.5 0.4 L10.4 3.2 V8.8 L5.5 11.6 L0.6 8.8 V3.2 Z" fill="#6cc24a"/><path d="M5.5 6 L10.4 3.2 V8.8 L5.5 11.6 Z" fill="#4e9e34"/><path d="M5.5 6 L0.6 3.2 L5.5 0.4 L10.4 3.2 Z" fill="#8ad966"/></svg>
<div class="t" style="left:441px;top:439.4px;font-size:10.5px;color:#c8c8c8;font-weight:normal;">Latency-With-...</div>
<div class="t" style="left:531.5px;top:439.6px;font-size:10px;color:#c4c4c4;font-weight:normal;letter-spacing:-0.55px">GET</div>
<div class="t" style="right:623.5px;top:436.9px;font-size:10px;color:#c8c8c8;font-weight:normal;">5.01s</div>
<div class="abs" style="left:682px;top:450.2px;width:52px;height:4px;background:#303033;border-radius:2px"></div>
<div class="abs" style="left:682px;top:450.2px;width:52px;height:4px;background:#b3aeea;border-radius:2px"></div>
<div class="badge" style="left:765px;top:436.0px;width:45px;background:#3c347c">Get</div>
<div class="badge" style="left:839.5px;top:436.0px;width:45px;background:#0a2819;color:#2fb36a">200</div>
<div class="badge" style="left:921.5px;top:436.0px;width:45px;background:#0f3558">Parent</div>
<div class="badge" style="left:996.5px;top:436.0px;width:45px;background:#0f3558">Unset</div>
<div class="badge" style="left:1080px;top:436.0px;width:45px;background:#0f3558">Server</div>
<div class="badge" style="left:1162px;top:442.0px;width:26.5px;height:15px;line-height:15px;font-size:8.5px;color:#c8c8c8;background:#333437">0</div>
<div class="badge" style="left:1195px;top:442.0px;width:26.5px;height:15px;line-height:15px;font-size:8.5px;color:#c8c8c8;background:#333437">0</div>
<div class="abs" style="left:1244.6px;top:437.0px;width:89.4px;height:15px;background:#10507e"></div>
<div class="abs" style="left:208px;top:492.6px;width:1138px;height:1px;background:#252527"></div>
<div class="abs" style="left:216px;top:470.1px;width:2.5px;height:15px;background:#22b573;border-radius:1px"></div>
<div class="t" style="left:222.6px;top:472.6px;font-size:10px;color:#c8c8c8;font-weight:normal;">21 Sep 23:22:00.936</div>
<svg style="left:337px;top:471.1px" width="13" height="13" viewBox="0 0 13 13"><circle cx="6.5" cy="6.5" r="6.5" fill="#3a2832"/><circle cx="6.5" cy="6.5" r="4.5" fill="#e8487f"/><g fill="none" stroke="#3a2832" stroke-width="0.7"><ellipse cx="6.5" cy="6.5" rx="1.9" ry="4.5"/><path d="M2 6.5 H11 M2.8 4.3 H10.2 M2.8 8.7 H10.2 M6.5 2 V11"/></g></svg>
<div class="t" style="left:355px;top:472.6px;font-size:10px;color:#c8c8c8;font-weight:normal;">Web</div>
<svg style="left:427px;top:471.1px" width="11" height="12" viewBox="0 0 11 12"><path d="M5.5 0.4 L10.4 3.2 V8.8 L5.5 11.6 L0.6 8.8 V3.2 Z" fill="#6cc24a"/><path d="M5.5 6 L10.4 3.2 V8.8 L5.5 11.6 Z" fill="#4e9e34"/><path d="M5.5 6 L0.6 3.2 L5.5 0.4 L10.4 3.2 Z" fill="#8ad966"/></svg>
<div class="t" style="left:441px;top:472.4px;font-size:10.5px;color:#c8c8c8;font-weight:normal;">Latency-With-...</div>
<div class="t" style="left:531.5px;top:472.6px;font-size:10px;color:#c4c4c4;font-weight:normal;letter-spacing:-0.55px">GET</div>
<div class="t" style="right:623.5px;top:469.9px;font-size:10px;color:#c8c8c8;font-weight:normal;">4.01s</div>
<div class="abs" style="left:682px;top:483.2px;width:52px;height:4px;background:#303033;border-radius:2px"></div>
<div class="abs" style="left:682px;top:483.2px;width:41px;height:4px;background:#b3aeea;border-radius:2px"></div>
<div class="badge" style="left:765px;top:468.0px;width:45px;background:#3c347c">Get</div>
<div class="badge" style="left:839.5px;top:468.0px;width:45px;background:#0a2819;color:#2fb36a">200</div>
<div class="badge" style="left:921.5px;top:468.0px;width:45px;background:#0f3558">Parent</div>
<div class="badge" style="left:996.5px;top:468.0px;width:45px;background:#0f3558">Unset</div>
<div class="badge" style="left:1080px;top:468.0px;width:45px;background:#0f3558">Server</div>
<div class="badge" style="left:1162px;top:474.0px;width:26.5px;height:15px;line-height:15px;font-size:8.5px;color:#c8c8c8;background:#333437">0</div>
<div class="badge" style="left:1195px;top:474.0px;width:26.5px;height:15px;line-height:15px;font-size:8.5px;color:#c8c8c8;background:#333437">0</div>
<div class="abs" style="left:1244.6px;top:470.0px;width:89.4px;height:15px;background:#10507e"></div>
<div class="abs" style="left:208px;top:525.2px;width:1138px;height:1px;background:#252527"></div>
<div class="abs" style="left:216px;top:502.5px;width:2.5px;height:15px;background:#22b573;border-radius:1px"></div>
<div class="t" style="left:222.6px;top:505.0px;font-size:10px;color:#c8c8c8;font-weight:normal;">21 Sep 23:21:45.208</div>
<svg style="left:337px;top:503.5px" width="13" height="13" viewBox="0 0 13 13"><circle cx="6.5" cy="6.5" r="6.5" fill="#3a2832"/><circle cx="6.5" cy="6.5" r="4.5" fill="#e8487f"/><g fill="none" stroke="#3a2832" stroke-width="0.7"><ellipse cx="6.5" cy="6.5" rx="1.9" ry="4.5"/><path d="M2 6.5 H11 M2.8 4.3 H10.2 M2.8 8.7 H10.2 M6.5 2 V11"/></g></svg>
<div class="t" style="left:355px;top:505.0px;font-size:10px;color:#c8c8c8;font-weight:normal;">Web</div>
<svg style="left:427px;top:503.5px" width="11" height="12" viewBox="0 0 11 12"><path d="M5.5 0.4 L10.4 3.2 V8.8 L5.5 11.6 L0.6 8.8 V3.2 Z" fill="#6cc24a"/><path d="M5.5 6 L10.4 3.2 V8.8 L5.5 11.6 Z" fill="#4e9e34"/><path d="M5.5 6 L0.6 3.2 L5.5 0.4 L10.4 3.2 Z" fill="#8ad966"/></svg>
<div class="t" style="left:441px;top:504.8px;font-size:10.5px;color:#c8c8c8;font-weight:normal;">Latency-With-...</div>
<div class="t" style="left:531.5px;top:505.0px;font-size:10px;color:#c4c4c4;font-weight:normal;letter-spacing:-0.55px">POST</div>
<div class="t" style="right:623.5px;top:502.3px;font-size:10px;color:#c8c8c8;font-weight:normal;">49.80ms</div>
<div class="abs" style="left:682px;top:515.6px;width:52px;height:4px;background:#303033;border-radius:2px"></div>
<div class="abs" style="left:682px;top:515.6px;width:1px;height:4px;background:#b3aeea;border-radius:2px"></div>
<div class="badge" style="left:765px;top:501.0px;width:45px;background:#1e4a35">Post</div>
<div class="badge" style="left:839.5px;top:501.0px;width:45px;background:#54300f;color:#f5a04a">201</div>
<div class="badge" style="left:921.5px;top:501.0px;width:45px;background:#0f3558">Parent</div>
<div class="badge" style="left:996.5px;top:501.0px;width:45px;background:#0f3558">Unset</div>
<div class="badge" style="left:1080px;top:501.0px;width:45px;background:#0f3558">Server</div>
<div class="badge" style="left:1162px;top:507.0px;width:26.5px;height:15px;line-height:15px;font-size:8.5px;color:#c8c8c8;background:#333437">0</div>
<div class="badge" style="left:1195px;top:507.0px;width:26.5px;height:15px;line-height:15px;font-size:8.5px;color:#c8c8c8;background:#333437">0</div>
<div class="abs" style="left:1244.6px;top:502.0px;width:89.4px;height:15px;background:#10507e"></div>
<div class="abs" style="left:208px;top:557.9px;width:1138px;height:1px;background:#252527"></div>
<div class="abs" style="left:216px;top:535.1px;width:2.5px;height:15px;background:#22b573;border-radius:1px"></div>
<div class="t" style="left:222.6px;top:537.6px;font-size:10px;color:#c8c8c8;font-weight:normal;">21 Sep 23:11:41.408</div>
<svg style="left:337px;top:536.1px" width="13" height="13" viewBox="0 0 13 13"><circle cx="6.5" cy="6.5" r="6.5" fill="#3a2832"/><circle cx="6.5" cy="6.5" r="4.5" fill="#e8487f"/><g fill="none" stroke="#3a2832" stroke-width="0.7"><ellipse cx="6.5" cy="6.5" rx="1.9" ry="4.5"/><path d="M2 6.5 H11 M2.8 4.3 H10.2 M2.8 8.7 H10.2 M6.5 2 V11"/></g></svg>
<div class="t" style="left:355px;top:537.6px;font-size:10px;color:#c8c8c8;font-weight:normal;">Web</div>
<svg style="left:427px;top:536.1px" width="11" height="12" viewBox="0 0 11 12"><path d="M5.5 0.4 L10.4 3.2 V8.8 L5.5 11.6 L0.6 8.8 V3.2 Z" fill="#6cc24a"/><path d="M5.5 6 L10.4 3.2 V8.8 L5.5 11.6 Z" fill="#4e9e34"/><path d="M5.5 6 L0.6 3.2 L5.5 0.4 L10.4 3.2 Z" fill="#8ad966"/></svg>
<div class="t" style="left:441px;top:537.4px;font-size:10.5px;color:#c8c8c8;font-weight:normal;">Latency-With-...</div>
<div class="t" style="left:531.5px;top:537.6px;font-size:10px;color:#c4c4c4;font-weight:normal;letter-spacing:-0.55px">GET</div>
<div class="t" style="right:623.5px;top:534.9px;font-size:10px;color:#c8c8c8;font-weight:normal;">5.09s</div>
<div class="abs" style="left:682px;top:548.2px;width:52px;height:4px;background:#303033;border-radius:2px"></div>
<div class="abs" style="left:682px;top:548.2px;width:52px;height:4px;background:#b3aeea;border-radius:2px"></div>
<div class="badge" style="left:765px;top:533.0px;width:45px;background:#3c347c">Get</div>
<div class="badge" style="left:839.5px;top:533.0px;width:45px;background:#0a2819;color:#2fb36a">200</div>
<div class="badge" style="left:921.5px;top:533.0px;width:45px;background:#0f3558">Parent</div>
<div class="badge" style="left:996.5px;top:533.0px;width:45px;background:#0f3558">Unset</div>
<div class="badge" style="left:1080px;top:533.0px;width:45px;background:#0f3558">Server</div>
<div class="badge" style="left:1162px;top:539.0px;width:26.5px;height:15px;line-height:15px;font-size:8.5px;color:#c8c8c8;background:#333437">0</div>
<div class="badge" style="left:1195px;top:539.0px;width:26.5px;height:15px;line-height:15px;font-size:8.5px;color:#c8c8c8;background:#333437">0</div>
<div class="abs" style="left:1244.6px;top:535.0px;width:89.4px;height:15px;background:#10507e"></div>
<div class="t" style="left:217px;top:570.8px;font-size:10.4px;color:#c8c8c8">Showing: <b>1-4</b> of <b>4</b></div>
<div class="red" style="left:0px;top:111.19999999999999px;width:41.5px;height:41.5px"></div>
<div class="red" style="left:1069px;top:84px;width:291px;height:110px"></div>
<div class="red" style="left:196px;top:358.8px;width:1159px;height:244.2px"></div>
</div></div></body></html>
